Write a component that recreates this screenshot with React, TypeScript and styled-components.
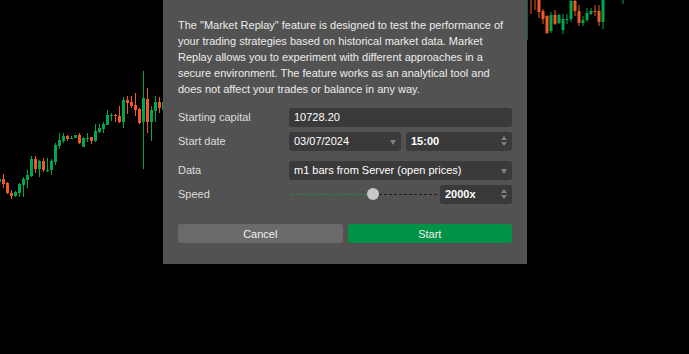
import styled, { createGlobalStyle } from "styled-components";

const GlobalStyle = createGlobalStyle`
  html, body {
    margin: 0;
    padding: 0;
    background: #000;
    overflow: hidden;
  }
  body {
    font-family: "Liberation Sans", Arial, sans-serif;
  }
`;

const UP = "#03a64f";
const DOWN = "#f15a24";

// [x, bodyTop, bodyBottom, wickTop, wickBottom, up]
type Candle = [number, number, number, number, number, boolean];

const leftRaw: [number, number, number, number, boolean][] = [
  [179, 182, 177, 183, true],
  [179, 184, 174, 188, false],
  [183, 193, 182, 194, false],
  [193, 196, 190, 199, false],
  [192, 196, 191, 197, true],
  [184, 193, 183, 197, true],
  [179, 185, 177, 197, true],
  [175, 180, 170, 188, true],
  [159, 176, 156, 177, true],
  [159, 169, 156, 173, false],
  [161, 169, 160, 177, true],
  [161, 170, 158, 172, false],
  [170, 171, 158, 172, true],
  [161, 170, 159, 175, true],
  [145, 162, 143, 165, true],
  [140, 146, 133, 149, true],
  [136, 141, 133, 143, true],
  [136, 139, 135, 141, false],
  [138, 139, 136, 139, true],
  [135, 138, 135, 138, true],
  [135, 143, 133, 144, false],
  [138, 147, 137, 147, true],
  [138, 139, 133, 142, true],
  [137, 141, 137, 144, false],
  [131, 141, 124, 142, true],
  [128, 132, 124, 133, true],
  [124, 129, 122, 133, true],
  [115, 125, 110, 125, true],
  [115, 116, 113, 121, true],
  [115, 116, 114, 122, false],
  [116, 122, 106, 123, false],
  [100, 122, 97, 128, true],
  [100, 103, 96, 114, false],
  [102, 106, 96, 108, false],
  [105, 110, 93, 116, false],
  [109, 123, 108, 124, false],
  [98, 122, 71, 169, true],
  [99, 122, 88, 133, false],
  [110, 122, 106, 141, true],
  [102, 111, 96, 122, true],
  [102, 108, 97, 113, false],
  [102, 110, 100, 112, true],
];

const leftCandles: Candle[] = leftRaw.map(([a, b, c, d, up], i) => [
  -0.5 + i * 4,
  a,
  b,
  c,
  d,
  up,
]);

const rightCandles: Candle[] = [
  [531, -2, 0, 0, 14, false],
  [535, -2, 0, 0, 10, false],
  [539, 0, 12, 0, 18, false],
  [543, 11, 19, 9, 24, false],
  [547, 16, 33, 15, 34, false],
  [551, 15, 31, 12, 33, true],
  [555, 15, 24, 10, 25, false],
  [559, 15, 23, 14, 24, true],
  [563, 19, 30, 14, 34, true],
  [567, 19, 20, 14, 24, true],
  [571, 1, 19, 0, 22, true],
  [575, 1, 11, 0, 16, false],
  [579, 11, 23, 5, 26, false],
  [583, 20, 23, 16, 26, true],
  [587, 13, 20, 8, 22, true],
  [591, 11, 14, 8, 15, true],
  [595, 11, 12, 5, 16, false],
  [599, 11, 22, 5, 26, false],
  [603, 0, 22, 0, 29, true],
  [623, -2, 0, 0, 4, true],
];

const Page = styled.div`
  position: relative;
  width: 689px;
  height: 354px;
  background: #000;
  overflow: hidden;
`;

const Chart = styled.svg`
  display: block;
  width: 689px;
  height: 354px;
`;

const Dialog = styled.div`
  position: absolute;
  top: 0;
  left: 163px;
  width: 364px;
  height: 264px;
  box-sizing: border-box;
  padding: 17px 15px 0;
  background: #525252;
  color: #e6e6e6;
  font-size: 11px;
  display: flex;
  flex-direction: column;
`;

const Intro = styled.p`
  margin: 0 0 11px;
  line-height: 16px;
  color: #ececec;
`;

const Row = styled.div<{ $gap?: number }>`
  display: grid;
  grid-template-columns: 111px 1fr;
  align-items: center;
  height: 19px;
  margin-top: ${(p) => p.$gap ?? 5}px;
`;

const Label = styled.span`
  color: #dcdcdc;
  line-height: 19px;
`;

const Fields = styled.div`
  display: flex;
  align-items: center;
  gap: 5px;
  height: 19px;
`;

const Field = styled.div<{ $width?: number; $bold?: boolean }>`
  position: relative;
  box-sizing: border-box;
  height: 19px;
  ${(p) => (p.$width ? `width: ${p.$width}px;` : "flex: 1;")}
  flex-shrink: 0;
  padding-left: 5px;
  background: #3a3a3a;
  border-radius: 3px;
  color: #fff;
  font-weight: ${(p) => (p.$bold ? 700 : 400)};
  line-height: 19px;
  white-space: nowrap;
`;

const Caret = styled.span`
  position: absolute;
  right: 5px;
  top: 8px;
  width: 0;
  height: 0;
  border-left: 3px solid transparent;
  border-right: 3px solid transparent;
  border-top: 5px solid #808080;
`;

const Spin = styled.span`
  position: absolute;
  right: 5px;
  top: 4px;
  display: flex;
  flex-direction: column;
  gap: 2px;
`;

const SpinArrow = styled.span<{ $up?: boolean }>`
  width: 0;
  height: 0;
  border-left: 3px solid transparent;
  border-right: 3px solid transparent;
  ${(p) =>
    p.$up ? "border-bottom: 4px solid #808080;" : "border-top: 4px solid #808080;"}
`;

const Slider = styled.div`
  position: relative;
  flex: 1;
  height: 19px;
  margin-left: 2px;
`;

const Track = styled.div<{ $filled?: boolean }>`
  position: absolute;
  top: 9px;
  height: 0;
  border-top: 1px dashed ${(p) => (p.$filled ? "#1f8a45" : "#1e1e1e")};
`;

const Thumb = styled.div`
  position: absolute;
  top: 3px;
  width: 12px;
  height: 12px;
  border-radius: 50%;
  background: #c8c8c8;
`;

const Buttons = styled.div`
  display: grid;
  grid-template-columns: 1fr 1fr;
  gap: 5px;
  margin-top: 20px;
`;

const Button = styled.button<{ $primary?: boolean }>`
  height: 19px;
  border: none;
  border-radius: 3px;
  padding: 0;
  font-family: "Liberation Sans", Arial, sans-serif;
  font-size: 11px;
  color: #f2f2f2;
  background: ${(p) => (p.$primary ? "#009245" : "#6a6a6a")};
  cursor: pointer;
`;

function CandleShape({ c }: { c: Candle }) {
  const [x, bt, bb, wt, wb, up] = c;
  const color = up ? UP : DOWN;
  return (
    <g>
      <rect x={x - 0.5} y={wt} width={1} height={wb - wt} fill={color} />
      <rect x={x - 1.5} y={bt} width={3} height={Math.max(1, bb - bt)} fill={color} />
    </g>
  );
}

export default function App() {
  const thumbLeft = 76;
  const sliderWidth = 146;
  return (
    <>
      <GlobalStyle />
      <Page>
        <Chart viewBox="0 0 689 354">
          {leftCandles.map((c, i) => (
            <CandleShape key={`l${i}`} c={c} />
          ))}
          {rightCandles.map((c, i) => (
            <CandleShape key={`r${i}`} c={c} />
          ))}
          <rect x={527} y={0} width={1} height={40} fill="#0b5e30" />
        </Chart>
        <Dialog>
          <Intro>
            The "Market Replay" feature is designed to test the performance of
            your trading strategies based on historical market data. Market
            Replay allows you to experiment with different approaches in a
            secure environment. The feature works as an analytical tool and does
            not affect your trades or balance in any way.
          </Intro>
          <Row $gap={0}>
            <Label>Starting capital</Label>
            <Fields>
              <Field>10728.20</Field>
            </Fields>
          </Row>
          <Row>
            <Label>Start date</Label>
            <Fields>
              <Field $width={112}>
                03/07/2024
                <Caret />
              </Field>
              <Field $bold>
                15:00
                <Spin>
                  <SpinArrow $up />
                  <SpinArrow />
                </Spin>
              </Field>
            </Fields>
          </Row>
          <Row $gap={10}>
            <Label>Data</Label>
            <Fields>
              <Field>
                m1 bars from Server (open prices)
                <Caret />
              </Field>
            </Fields>
          </Row>
          <Row>
            <Label>Speed</Label>
            <Fields>
              <Slider>
                <Track $filled style={{ left: 0, width: thumbLeft }} />
                <Track style={{ left: thumbLeft + 12, width: sliderWidth - thumbLeft - 12 }} />
                <Thumb style={{ left: thumbLeft }} />
              </Slider>
              <Field $width={72} $bold>
                2000x
                <Spin>
                  <SpinArrow $up />
                  <SpinArrow />
                </Spin>
              </Field>
            </Fields>
          </Row>
          <Buttons>
            <Button>Cancel</Button>
            <Button $primary>Start</Button>
          </Buttons>
        </Dialog>
      </Page>
    </>
  );
}
